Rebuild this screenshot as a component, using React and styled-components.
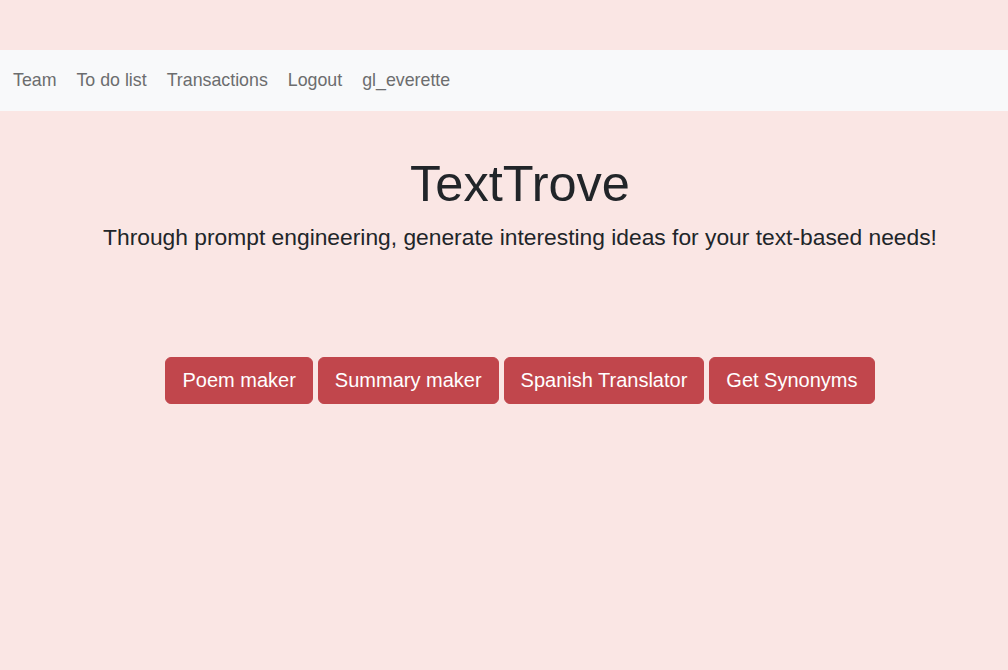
import React from 'react'
import styled, { createGlobalStyle } from 'styled-components'

const colors = {
    page: '#fae6e4',
    bar: '#f8f9fa',
    link: '#6c6d6e',
    text: '#212529',
    button: '#c1464c',
}

const GlobalStyle = createGlobalStyle`
    html, body {
        margin: 0;
        padding: 0;
        background: ${colors.page};
        font-family: "Liberation Sans", Arial, sans-serif;
    }
`

const Page = styled.div`
    box-sizing: border-box;
    min-height: 670px;
    padding-top: 50px;
    background: ${colors.page};
`

const NavBar = styled.nav`
    height: 61px;
    background: ${colors.bar};

    display: flex;
    align-items: center;
    gap: 20px;

    padding: 0 0 0 13px;
`

const NavLink = styled.a`
    font-size: 17.8px;
    color: ${colors.link};
    text-decoration: none;
    cursor: pointer;
`

const Main = styled.main`
    display: flex;
    flex-direction: column;
    align-items: center;

    padding: 0 0 0 32px;
`

const Title = styled.h1`
    font-size: 50.5px;
    font-weight: 400;
    line-height: 1.2;
    color: ${colors.text};

    margin: 43px 0 0 0;
`

const Lead = styled.p`
    font-size: 22.8px;
    line-height: 1.5;
    color: ${colors.text};

    margin: 5px 0 0 0;
`

const ButtonRow = styled.div`
    display: flex;
    gap: 5px;

    margin: 103px 0 0 0;
`

const Button = styled.button`
    font-family: inherit;
    font-size: 20px;
    line-height: 1.5;
    color: #fff;

    background: ${colors.button};
    border: 1px solid ${colors.button};
    border-radius: 6px;

    padding: 7.5px 16px;
    cursor: pointer;
`

const tools = ['Poem maker', 'Summary maker', 'Spanish Translator', 'Get Synonyms']

const App = () => {
    return (
        <Page>
            <GlobalStyle />
            <NavBar>
                <NavLink>Team</NavLink>
                <NavLink>To do list</NavLink>
                <NavLink>Transactions</NavLink>
                <NavLink>Logout</NavLink>
                <NavLink>gl_everette</NavLink>
            </NavBar>
            <Main>
                <Title>TextTrove</Title>
                <Lead>Through prompt engineering, generate interesting ideas for your text-based needs!</Lead>
                <ButtonRow>
                    {tools.map(t => <Button key={t}>{t}</Button>)}
                </ButtonRow>
            </Main>
        </Page>
    )
}

export default App
